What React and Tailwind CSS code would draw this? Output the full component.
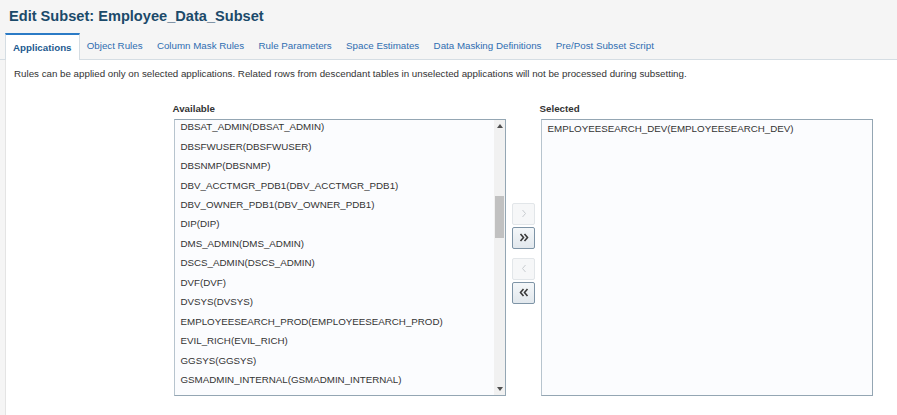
import React from "react";

const available = [
  "DBSAT_ADMIN(DBSAT_ADMIN)",
  "DBSFWUSER(DBSFWUSER)",
  "DBSNMP(DBSNMP)",
  "DBV_ACCTMGR_PDB1(DBV_ACCTMGR_PDB1)",
  "DBV_OWNER_PDB1(DBV_OWNER_PDB1)",
  "DIP(DIP)",
  "DMS_ADMIN(DMS_ADMIN)",
  "DSCS_ADMIN(DSCS_ADMIN)",
  "DVF(DVF)",
  "DVSYS(DVSYS)",
  "EMPLOYEESEARCH_PROD(EMPLOYEESEARCH_PROD)",
  "EVIL_RICH(EVIL_RICH)",
  "GGSYS(GGSYS)",
  "GSMADMIN_INTERNAL(GSMADMIN_INTERNAL)",
];

const tabs = [
  "Object Rules",
  "Column Mask Rules",
  "Rule Parameters",
  "Space Estimates",
  "Data Masking Definitions",
  "Pre/Post Subset Script",
];

function Chevron({ dir, double, disabled }) {
  const color = disabled ? "#c9cdd1" : "#3a3a3a";
  const sw = disabled ? 1 : 1.6;
  const flip = dir === "left";
  const single = (x) => (flip ? `${x + 3},1 ${x},4.5 ${x + 3},8` : `${x},1 ${x + 3},4.5 ${x},8`);
  return (
    <svg width="10" height="9" viewBox="0 0 10 9" fill="none">
      {double ? (
        <>
          <polyline points={single(1.5)} stroke={color} strokeWidth={sw} />
          <polyline points={single(5.5)} stroke={color} strokeWidth={sw} />
        </>
      ) : (
        <polyline points={single(3.5)} stroke={color} strokeWidth={sw} />
      )}
    </svg>
  );
}

function ShuttleButton({ dir, double, disabled }) {
  return (
    <div
      className={
        disabled
          ? "w-[23px] h-[22px] rounded-[2px] border border-[#e2e6e9] bg-[#f6f7f8] flex items-center justify-center"
          : "w-[23px] h-[22px] rounded-[2px] border border-[#7e94a6] bg-gradient-to-b from-[#f4f7f9] to-[#e2e8ed] flex items-center justify-center"
      }
    >
      <Chevron dir={dir} double={double} disabled={disabled} />
    </div>
  );
}

export default function App() {
  return (
    <div
      className="w-[897px] h-[415px] overflow-hidden bg-[#f5f5f5] text-[#333333] flex flex-col"
      style={{ fontFamily: '"Liberation Sans", Arial, sans-serif' }}
    >
      <div className="h-[33px] flex items-center pl-[9px] text-[14.6px] font-bold text-[#1b4a6a]">
        Edit Subset: Employee_Data_Subset
      </div>
      <div className="h-[27px] flex items-stretch pl-[5px] border-b border-[#d5dde3] text-[9.75px]">
        <div className="mb-[-1px] pt-[1px] bg-white border-t-2 border-t-[#2b7bc6] border-x border-x-[#d5dde3] px-[7px] flex items-center font-bold text-[#1d5a8f]">
          Applications
        </div>
        {tabs.map((t) => (
          <div key={t} className="px-[7.2px] pt-[1px] flex items-center text-[#2f6db1]">
            {t}
          </div>
        ))}
      </div>
      <div className="flex-1 ml-[5px] bg-white border-l border-[#e4e4e4] flex flex-col">
        <div className="pl-[8px] pt-[7px] text-[9.75px] leading-[14px] text-[#333]">
          Rules can be applied only on selected applications. Related rows from descendant tables in unselected applications will not be processed during subsetting.
        </div>
        <div className="mt-[20.5px] ml-[168px] flex items-start gap-[6px]">
          <div className="flex flex-col">
            <div className="ml-[-1.5px] h-[14px] leading-[14px] mb-[3.5px] text-[9.75px] font-bold text-[#333]">Available</div>
            <div className="w-[332px] h-[277px] border border-[#94a6b3] border-l-[#b7c4ce] bg-[#fbfcfe] flex overflow-hidden">
              <div className="flex-1 overflow-hidden">
                <div className="mt-[-2.8px]">
                  {available.map((a) => (
                    <div key={a} className="h-[19.46px] leading-[19.46px] pl-[5.5px] text-[9.75px] text-[#333] whitespace-nowrap">
                      {a}
                    </div>
                  ))}
                </div>
              </div>
              <div className="w-[11px] bg-[#f1f1f1] flex flex-col items-center">
                <svg className="mt-[4px]" width="6" height="4" viewBox="0 0 6 4">
                  <polygon points="0,4 3,0 6,4" fill="#505050" />
                </svg>
                <div className="mt-[68px] w-[9px] h-[42px] bg-[#c1c1c1]" />
                <div className="flex-1" />
                <svg className="mb-[4px]" width="6" height="4" viewBox="0 0 6 4">
                  <polygon points="0,0 6,0 3,4" fill="#505050" />
                </svg>
              </div>
            </div>
          </div>
          <div className="mt-[101px] flex flex-col">
            <ShuttleButton dir="right" disabled />
            <div className="mt-[2px]">
              <ShuttleButton dir="right" double />
            </div>
            <div className="mt-[9px]">
              <ShuttleButton dir="left" disabled />
            </div>
            <div className="mt-[2px]">
              <ShuttleButton dir="left" double />
            </div>
          </div>
          <div className="flex flex-col">
            <div className="ml-[-1.5px] h-[14px] leading-[14px] mb-[3.5px] text-[9.75px] font-bold text-[#333]">Selected</div>
            <div className="w-[332px] h-[277px] border border-[#94a6b3] border-l-[#b7c4ce] bg-[#fbfcfe] overflow-hidden">
              <div className="h-[18px] leading-[18px] pl-[5.5px] text-[9.75px] text-[#333] whitespace-nowrap">
                EMPLOYEESEARCH_DEV(EMPLOYEESEARCH_DEV)
              </div>
            </div>
          </div>
        </div>
      </div>
    </div>
  );
}
